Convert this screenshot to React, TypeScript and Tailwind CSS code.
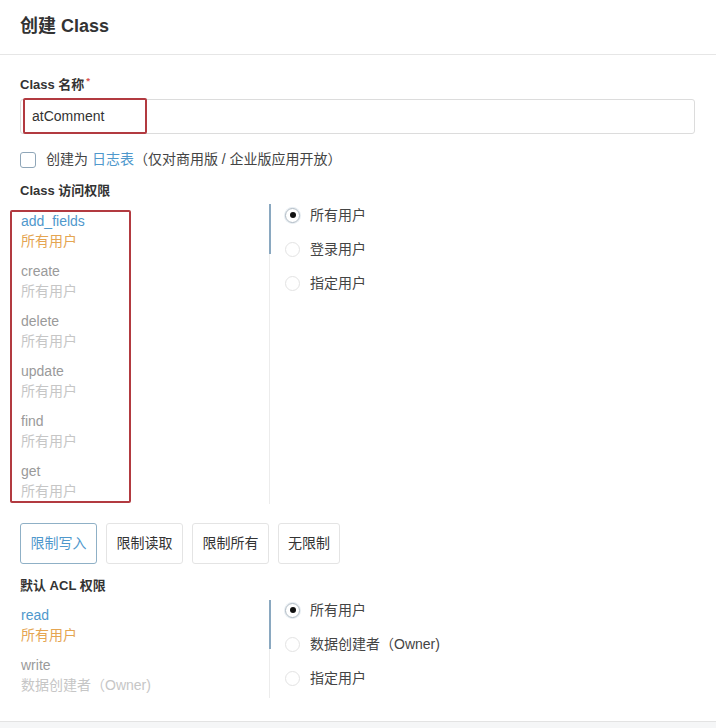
import React from 'react';

const perms = [
  { name: 'add_fields', value: '所有用户', active: true },
  { name: 'create', value: '所有用户' },
  { name: 'delete', value: '所有用户' },
  { name: 'update', value: '所有用户' },
  { name: 'find', value: '所有用户' },
  { name: 'get', value: '所有用户' },
];

const acl = [
  { name: 'read', value: '所有用户', active: true },
  { name: 'write', value: '数据创建者（Owner)' },
];

const Radio = ({ checked, label }: { checked?: boolean; label: string }) => (
  <div className="flex items-center gap-[10px] h-[34px]">
    <span
      className={
        'w-[15px] h-[15px] rounded-full border flex items-center justify-center ' +
        (checked ? 'border-[#aeb9c3] shadow-[0_0_0_1px_#e6ecf1]' : 'border-[#e3e3e3]')
      }
    >
      {checked && <span className="w-[6px] h-[6px] rounded-full bg-[#111]" />}
    </span>
    <span className="text-[14px] text-[#444]">{label}</span>
  </div>
);

const PermItem = ({ name, value, active }: { name: string; value: string; active?: boolean }) => (
  <div className="flex flex-col text-[14px] leading-[20px]">
    <span className={active ? 'text-[#4f98cc]' : 'text-[#9a9a9a]'}>{name}</span>
    <span className={active ? 'text-[#e5a552]' : 'text-[#c6c6c6]'}>{value}</span>
  </div>
);

export default function App() {
  return (
    <div
      className="w-[716px] h-[728px] bg-white text-[#333] overflow-hidden flex flex-col"
      style={{ fontFamily: '"Liberation Sans", "Noto Sans CJK SC", sans-serif' }}
    >
      <div className="h-[55px] shrink-0 px-5 flex items-center border-b border-[#e6e6e6]">
        <h1 className="text-[18px] font-bold text-[#333] -mt-[2px]">创建 Class</h1>
      </div>

      <div className="flex-1 pl-5 pr-[21px] pt-[21px] pb-[23px]">
        <div className="text-[13px] leading-[18px] font-bold">
          Class 名称<sup className="text-[#d9534f] ml-[2px]">*</sup>
        </div>

        <div className="relative mt-[5px]">
          <div className="h-[35px] border border-[#dcdcdc] rounded-[3px] flex items-center pl-[11px] text-[14px] text-[#333]">
            atComment
          </div>
          <div className="absolute left-[3px] -top-[1px] w-[124px] h-[36px] border-2 border-[#b23a40] rounded-[2px]" />
        </div>

        <div className="mt-[17px] flex items-center gap-[10px] h-[17px]">
          <span className="w-[16px] h-[16px] border border-[#8fa6b8] rounded-[3px]" />
          <span className="text-[14px] text-[#444]">
            创建为 <span className="text-[#4f98cc]">日志表</span>（仅对商用版 / 企业版应用开放）
          </span>
        </div>

        <div className="mt-[14px] text-[13px] leading-[18px] font-bold">Class 访问权限</div>

        <div className="mt-[4px] flex h-[300px]">
          <div className="relative w-[249px] pt-[7px] pl-[1px] flex flex-col gap-[10px]">
            {perms.map((p) => (
              <PermItem key={p.name} {...p} />
            ))}
            <div className="absolute -left-[10px] top-[6px] w-[121px] h-[293px] border-2 border-[#b23a40] rounded-[2px]" />
          </div>
          <div className="relative flex-1 border-l border-[#ececec] pl-[15px]">
            <div className="absolute -left-[1px] top-0 w-[2px] h-[50px] bg-[#8aa8c0]" />
            <div className="-mt-[6px]">
              <Radio checked label="所有用户" />
              <Radio label="登录用户" />
              <Radio label="指定用户" />
            </div>
          </div>
        </div>

        <div className="mt-[19px] flex gap-[9px]">
          <button className="w-[77px] h-[41px] border border-[#8fb0c6] rounded-[3px] text-[14px] text-[#4f98cc]">
            限制写入
          </button>
          <button className="w-[77px] h-[41px] border border-[#e4e4e4] rounded-[3px] text-[14px] text-[#333]">
            限制读取
          </button>
          <button className="w-[77px] h-[41px] border border-[#e4e4e4] rounded-[3px] text-[14px] text-[#333]">
            限制所有
          </button>
          <button className="w-[62px] h-[41px] border border-[#e4e4e4] rounded-[3px] text-[14px] text-[#333]">
            无限制
          </button>
        </div>

        <div className="mt-[13px] text-[13px] leading-[18px] font-bold">默认 ACL 权限</div>

        <div className="mt-[5px] flex h-[98px]">
          <div className="w-[249px] pt-[5px] pl-[1px] flex flex-col gap-[10px]">
            {acl.map((p) => (
              <PermItem key={p.name} {...p} />
            ))}
          </div>
          <div className="relative flex-1 border-l border-[#ececec] pl-[15px]">
            <div className="absolute -left-[1px] top-0 w-[2px] h-[49px] bg-[#8aa8c0]" />
            <div className="-mt-[7px]">
              <Radio checked label="所有用户" />
              <Radio label="数据创建者（Owner)" />
              <Radio label="指定用户" />
            </div>
          </div>
        </div>
      </div>

      <div className="h-[8px] shrink-0 border-t border-[#e3e3e3] bg-[#f5f6f7]" />
    </div>
  );
}
